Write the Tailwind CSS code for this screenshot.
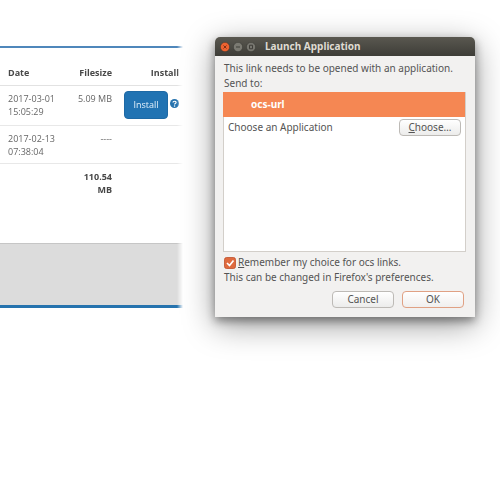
<!DOCTYPE html>
<html lang="en">
<head>
<meta charset="utf-8">
<meta name="viewport" content="width=device-width, initial-scale=1">
<title>Launch Application</title>
<script src="https://cdn.jsdelivr.net/npm/@tailwindcss/browser@4"></script>
</head>
<body class="min-h-screen overflow-x-hidden bg-white font-['Open_Sans',sans-serif]">
<main class="flex items-start gap-8 pr-[25px]">

  <section class="relative z-10 mt-[46px] min-w-0 flex-1 border-b-[3px] border-t-2 border-b-[#2673ae] border-t-[#4f87bb] bg-white text-[9px] leading-[13px] text-[#666] [mask-image:linear-gradient(to_left,transparent,black_6px)]">
    <table class="mt-[10px] w-full table-fixed border-collapse">
      <colgroup><col class="w-[66px]"><col class="w-[50px]"><col></colgroup>
      <thead>
        <tr class="h-[27px] border-b border-[#e2e2e2] text-[#484848]">
          <th class="pl-2 pt-[2px] text-left font-bold">Date</th>
          <th class="pr-1 pt-[2px] text-right font-bold">Filesize</th>
          <th class="pr-1 pt-[2px] text-right font-bold">Install</th>
        </tr>
      </thead>
      <tbody>
        <tr class="h-10 border-b border-[#e8e8e8] align-top">
          <td class="pl-2 pt-[6px]">2017-03-01 15:05:29</td>
          <td class="whitespace-nowrap pr-1 pt-[6px] text-right">5.09 MB</td>
          <td class="pl-2 pt-[5px]">
            <div class="flex items-center gap-[2px]">
              <button type="button" class="h-7 w-11 shrink-0 rounded-[4px] border border-[#1e69a5] bg-[#2173b3] text-[9px] text-[#e4f1fb]">Install</button>
              <a href="#" aria-label="Installation help" class="-mt-[2px] shrink-0">
                <svg class="size-[9px]" viewBox="0 0 18 18"><circle cx="9" cy="9" r="9" fill="#2673ae"/><path d="M6 7.2C6 3.6 12.2 3.6 12.2 7.1c0 2-3.1 2.1-3.1 4" fill="none" stroke="#fff" stroke-width="2.4"/><circle cx="9.1" cy="14" r="1.5" fill="#fff"/></svg>
              </a>
            </div>
          </td>
        </tr>
        <tr class="h-[38px] border-b border-[#e8e8e8] align-top">
          <td class="pl-2 pt-[6px]">2017-02-13 07:38:04</td>
          <td class="pr-1 pt-[6px] text-right">----</td>
          <td></td>
        </tr>
        <tr class="h-20 align-top font-bold text-[#484848]">
          <td></td>
          <td class="pl-[10px] pr-1 pt-[6px] text-right">110.54 MB</td>
          <td></td>
        </tr>
      </tbody>
    </table>
    <div class="h-[62px] border-t border-[#c6c6c6] bg-[#dcdcdc]"></div>
  </section>

  <div role="dialog" aria-labelledby="dialog-title" class="mt-[37px] w-[260px] rounded-t-[5px] bg-[#f2f1f0] font-['Noto_Sans',sans-serif] text-[10px] leading-[15px] text-[#545454] shadow-[0_8px_32px_rgba(0,0,0,0.4),0_4px_10px_rgba(0,0,0,0.4)]">
    <header class="flex h-[19px] items-center gap-[3px] rounded-t-[5px] bg-linear-to-b from-[#5a5850] to-[#3e3d38] pl-[5px]">
      <button type="button" aria-label="Close" class="size-[10px]">
        <svg class="size-full" viewBox="0 0 20 20"><circle cx="10" cy="10" r="9.3" fill="#ef6330" stroke="#35342f"/><path d="M7 7l6 6M13 7l-6 6" stroke="#803018" stroke-width="2"/></svg>
      </button>
      <button type="button" aria-label="Minimize" class="size-[10px]">
        <svg class="size-full" viewBox="0 0 20 20"><circle cx="10" cy="10" r="9.3" fill="#7b7a72" stroke="#35342f"/><path d="M6 10h8" stroke="#3f3e39" stroke-width="2"/></svg>
      </button>
      <button type="button" aria-label="Maximize" class="size-[10px]">
        <svg class="size-full" viewBox="0 0 20 20"><circle cx="10" cy="10" r="9.3" fill="#77766f" stroke="#35342f"/><path d="M7 6.5h6v7H7z" fill="none" stroke="#3f3e39" stroke-width="2"/></svg>
      </button>
      <h1 id="dialog-title" class="pl-[6px] text-[10px] font-bold text-[#dfdbd2]">Launch Application</h1>
    </header>

    <div class="px-[9px] pb-[9px] pt-[5px]">
      <p>This link needs to be opened with an application.</p>
      <p>Send to:</p>
      <div class="-ml-px mt-px h-40 border border-[#d3cfca] bg-white">
        <div class="-ml-px -mt-px flex h-[25px] items-center bg-[#f58753] pl-7 font-bold text-white">ocs-url</div>
        <div class="flex items-center justify-between pl-1 pr-1 pt-[2px]">
          <span>Choose an Application</span>
          <button type="button" class="h-[17px] w-[62px] rounded-[4px] border border-[#bdbab6] bg-linear-to-b from-white to-[#ececeb] leading-[13px]"><u>C</u>hoose…</button>
        </div>
      </div>
      <div class="flex items-center pt-[3px]">
        <input id="remember" type="checkbox" checked class="peer sr-only">
        <label for="remember" class="flex items-center gap-[2px]">
          <svg class="size-3" viewBox="0 0 24 24"><rect x="1" y="1" width="22" height="22" rx="4" fill="#df6a3e" stroke="#bb4b24" stroke-width="1.5"/><path d="M6 12l5 5 8-10" fill="none" stroke="#fff" stroke-width="3.4"/></svg>
          <span><u>R</u>emember my choice for ocs links.</span>
        </label>
      </div>
      <p>This can be changed in Firefox's preferences.</p>
      <footer class="mt-[6px] flex justify-end gap-2 pr-[2px]">
        <button type="button" class="h-[17px] w-[62px] rounded-[4px] border border-[#bdbab6] bg-linear-to-b from-white to-[#ececeb] leading-[13px]">Cancel</button>
        <button type="button" class="h-[17px] w-[62px] rounded-[4px] border border-[#e0a184] bg-linear-to-b from-white to-[#f0efee] leading-[13px]">OK</button>
      </footer>
    </div>
  </div>
</main>
</body>
</html>
